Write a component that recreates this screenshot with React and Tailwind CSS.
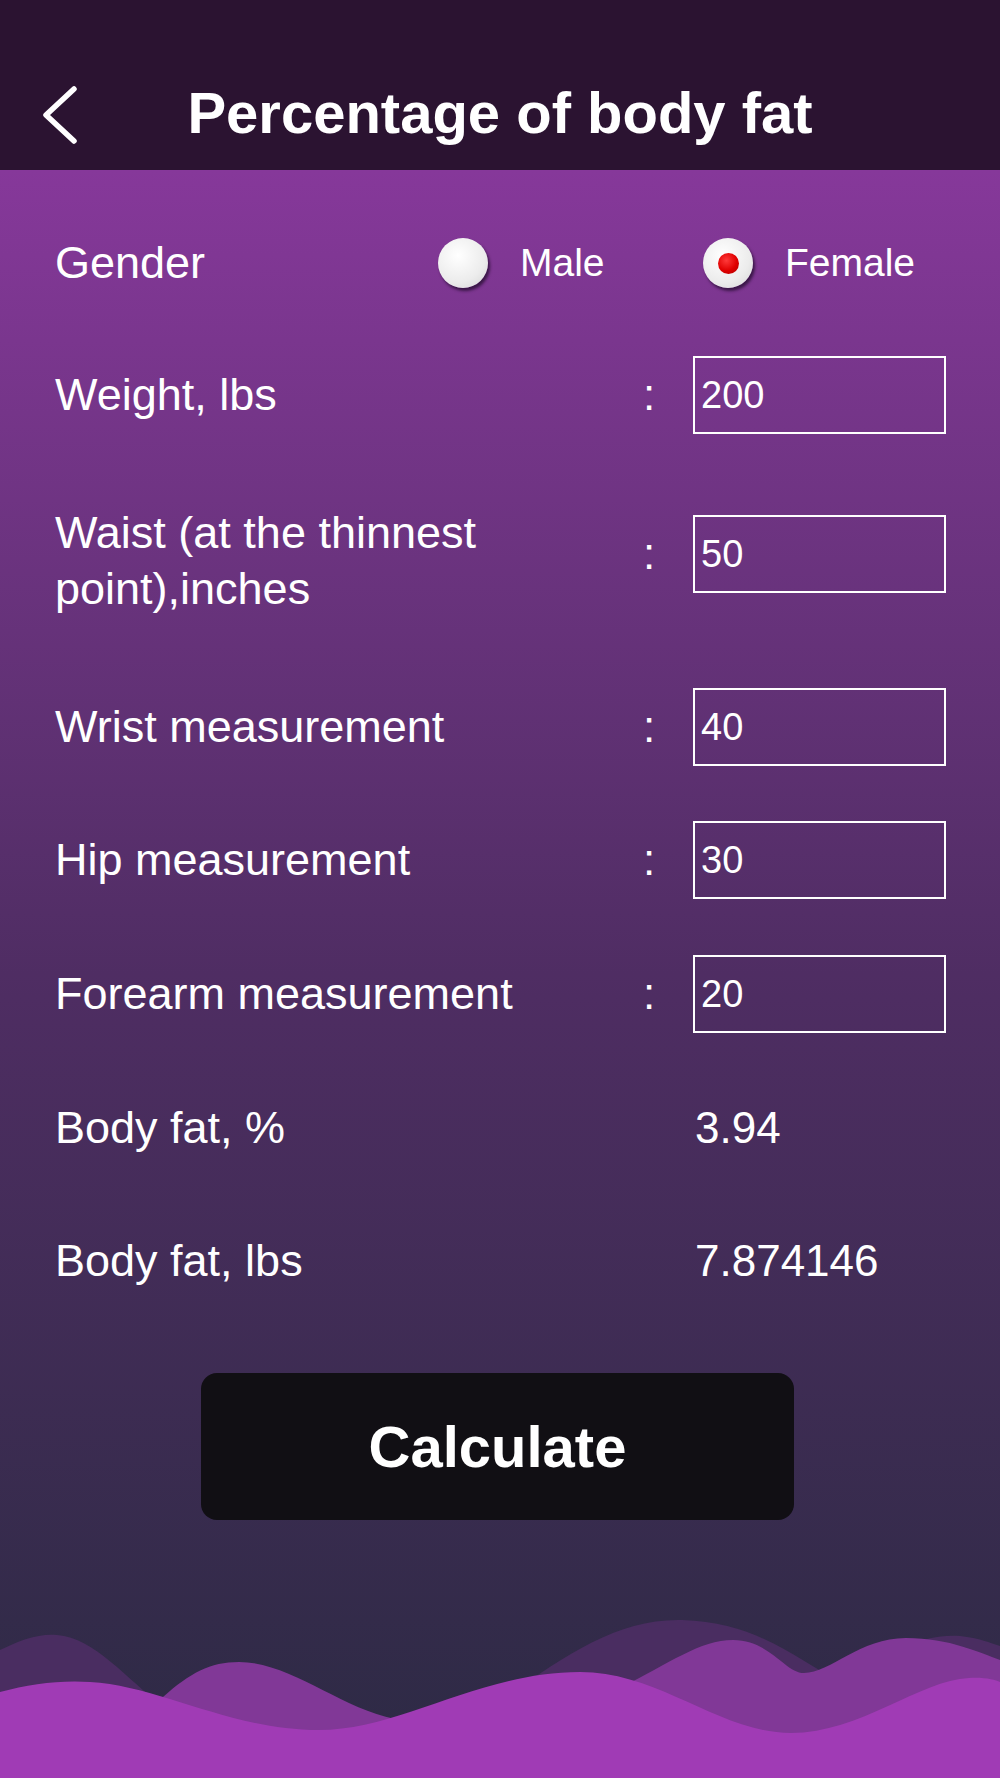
import { useState } from 'react';

const font = { fontFamily: '"Liberation Sans", Arial, sans-serif' };

function Radio({ checked, onClick }) {
  return (
    <button
      onClick={onClick}
      className="w-[50px] h-[50px] rounded-full flex items-center justify-center shrink-0 bg-[radial-gradient(circle_at_40%_35%,#ffffff,#ececec_60%,#d4d4d4)] shadow-[2px_3px_3px_rgba(30,10,40,0.7)]"
    >
      {checked && (
        <span className="w-[21px] h-[21px] rounded-full bg-[radial-gradient(circle_at_40%_35%,#ff3a3a,#e00000_55%,#a80000)]" />
      )}
    </button>
  );
}

function Field({ label, value, onChange, className = '', labelClass = '' }) {
  return (
    <div className={`flex items-center h-[78px] ${className}`}>
      <div className={`w-[570px] text-[45px] leading-[56px] text-white ${labelClass}`}>{label}</div>
      <div className="w-[68px] pl-[18px] text-[44px] text-white">:</div>
      <input
        value={value}
        onChange={(e) => onChange(e.target.value)}
        className="w-[253px] h-[78px] border-2 border-white bg-transparent text-white text-[38px] pl-[6px] outline-none"
        style={font}
      />
    </div>
  );
}

export default function App() {
  const [gender, setGender] = useState('female');
  const [vals, setVals] = useState({ weight: '200', waist: '50', wrist: '40', hip: '30', forearm: '20' });
  const set = (k) => (v) => setVals({ ...vals, [k]: v });

  return (
    <div className="w-[1000px] h-[1778px] flex flex-col overflow-hidden" style={font}>
      {/* header */}
      <div className="h-[170px] pt-[56px] bg-[#2b1331] flex items-center relative shrink-0">
        <svg className="absolute left-[40px] top-[86px] w-[40px] h-[58px]" viewBox="0 0 40 58" fill="none">
          <path d="M34 3 L6 29 L34 55" stroke="white" strokeWidth="5.5" strokeLinecap="round" strokeLinejoin="round" />
        </svg>
        <h1 className="w-full text-center text-white font-bold text-[58px] leading-none">
          Percentage of body fat
        </h1>
      </div>

      {/* body */}
      <div className="flex-1 flex flex-col bg-linear-to-b from-[#86389a] via-[#4f2d63] to-[#2c2a44] pl-[55px]">
        <div className="h-[186px] flex items-center shrink-0">
          <div className="w-[383px] text-[45px] text-white">Gender</div>
          <Radio checked={gender === 'male'} onClick={() => setGender('male')} />
          <div className="ml-[32px] w-[183px] text-[39px] text-white">Male</div>
          <Radio checked={gender === 'female'} onClick={() => setGender('female')} />
          <div className="ml-[32px] text-[39px] text-white">Female</div>
        </div>

        <Field label="Weight, lbs" value={vals.weight} onChange={set('weight')} />
        <Field
          label={<>Waist (at the thinnest<br />point),inches</>}
          value={vals.waist}
          onChange={set('waist')}
          className="mt-[81px]"
          labelClass="pt-[14px]"
        />
        <Field label="Wrist measurement" value={vals.wrist} onChange={set('wrist')} className="mt-[95px]" />
        <Field label="Hip measurement" value={vals.hip} onChange={set('hip')} className="mt-[55px]" />
        <Field label="Forearm measurement" value={vals.forearm} onChange={set('forearm')} className="mt-[56px]" />

        <div className="flex items-center h-[78px] mt-[56px] text-white text-[45px]">
          <div className="w-[640px]">Body fat, %</div>
          <div className="text-[44px]">3.94</div>
        </div>
        <div className="flex items-center h-[78px] mt-[55px] text-white text-[45px]">
          <div className="w-[640px]">Body fat, lbs</div>
          <div className="text-[44px]">7.874146</div>
        </div>

        <button className="mt-[73px] ml-[146px] w-[593px] h-[147px] rounded-[16px] bg-[#110f14] text-white font-bold text-[58px]">
          Calculate
        </button>

        <div className="mt-auto -ml-[55px]">
          <svg className="block w-[1000px] h-[160px]" viewBox="0 0 1000 160" preserveAspectRatio="none">
            <path
              fill="#4a2d61"
              d="M0,32 C20,22 40,15 57,17 C95,20 125,60 165,90 C230,140 380,160 450,115 C540,60 600,0 682,2 C760,4 800,45 835,60 C875,40 920,15 960,18 C980,20 990,25 1000,28 L1000,160 L0,160 Z"
            />
            <path
              fill="#813897"
              d="M0,140 C60,120 120,110 163,79 C190,55 210,44 239,44 C290,44 340,90 395,101 C450,112 560,90 620,70 C670,45 700,22 733,22 C770,22 785,55 804,55 C830,55 860,20 906,20 C950,20 980,35 1000,42 L1000,160 L0,160 Z"
            />
            <path
              fill="#a03bb5"
              d="M0,74 C30,66 60,62 90,64 C160,68 230,112 319,112 C400,112 480,54 580,54 C660,54 720,115 791,115 C860,115 920,62 969,60 C985,59 995,62 1000,64 L1000,160 L0,160 Z"
            />
          </svg>
        </div>
      </div>
    </div>
  );
}
